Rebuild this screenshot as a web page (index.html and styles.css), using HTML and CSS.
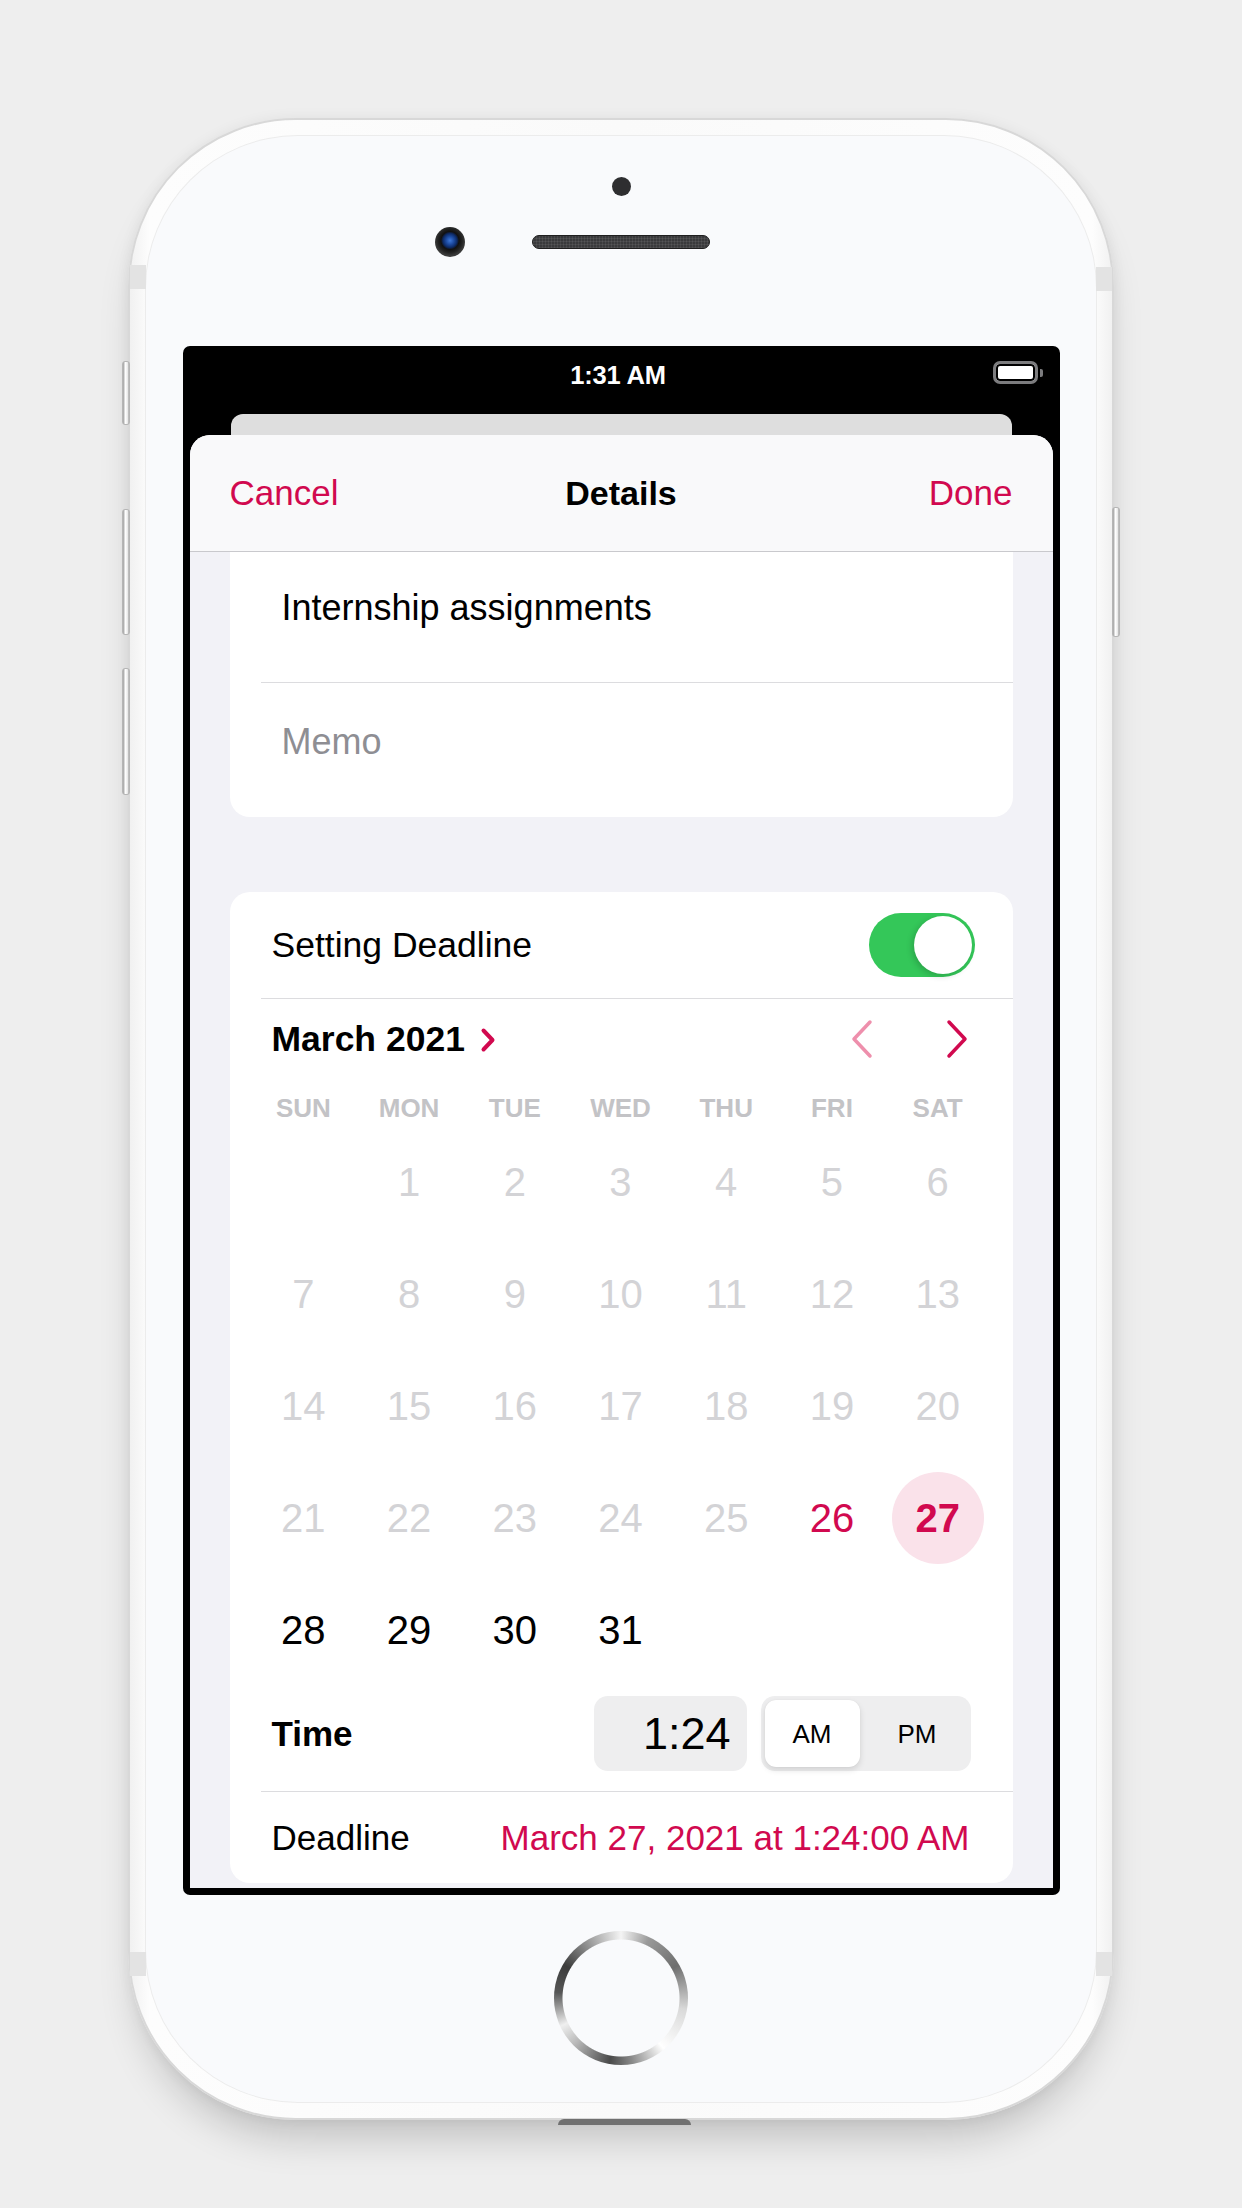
FILE: index.html
```html
<!DOCTYPE html>
<html lang="en">
<head>
<meta charset="utf-8">
<title>Details</title>
<link rel="stylesheet" href="styles.css">
</head>
<body>
<div class="phone">
  <span class="side-btn mute"></span>
  <span class="side-btn vol-up"></span>
  <span class="side-btn vol-down"></span>
  <span class="side-btn power"></span>
  <span class="antenna a-tl"></span>
  <span class="antenna a-tr"></span>
  <span class="antenna a-bl"></span>
  <span class="antenna a-br"></span>
  <span class="port"></span>
  <div class="face">
    <div class="sensor"></div>
    <div class="earpiece">
      <div class="camera"></div>
      <div class="speaker"></div>
      <div class="balance"></div>
    </div>
    <div class="screen">
      <div class="statusbar">
        <span></span>
        <span class="clock">1:31 AM</span>
        <span class="battery"><span class="battery-fill"></span><span class="battery-nub"></span></span>
      </div>
      <div class="backcard"></div>
      <div class="sheet">
        <div class="navbar">
          <span class="nav-btn">Cancel</span>
          <span class="nav-title">Details</span>
          <span class="nav-btn nav-done">Done</span>
        </div>
        <div class="content">
          <div class="card card-info">
            <div class="field-row title-row">Internship assignments</div>
            <div class="sep"></div>
            <div class="field-row memo-row">Memo</div>
          </div>
          <div class="card card-deadline">
            <div class="toggle-row">
              <span>Setting Deadline</span>
              <span class="toggle"><span class="knob"></span></span>
            </div>
            <div class="sep"></div>
            <div class="month-row">
              <span class="month-title">March 2021
                <svg class="month-chev" width="16" height="26" viewBox="0 0 16 26"><path d="M3.5 3.5 L12.5 13 L3.5 22.5" fill="none" stroke="#d1094f" stroke-width="4" stroke-linecap="round" stroke-linejoin="round"/></svg>
              </span>
              <span class="month-nav">
                <svg width="24" height="40" viewBox="0 0 24 40"><path d="M20 3 L4 20 L20 37" fill="none" stroke="#ee8fac" stroke-width="3.5" stroke-linecap="round" stroke-linejoin="round"/></svg>
                <svg width="24" height="40" viewBox="0 0 24 40"><path d="M4 3 L20 20 L4 37" fill="none" stroke="#d1094f" stroke-width="3.5" stroke-linecap="round" stroke-linejoin="round"/></svg>
              </span>
            </div>
            <div class="weekdays">
              <span>SUN</span><span>MON</span><span>TUE</span><span>WED</span><span>THU</span><span>FRI</span><span>SAT</span>
            </div>
            <div class="days">
              <span></span><span class="past">1</span><span class="past">2</span><span class="past">3</span><span class="past">4</span><span class="past">5</span><span class="past">6</span>
              <span class="past">7</span><span class="past">8</span><span class="past">9</span><span class="past">10</span><span class="past">11</span><span class="past">12</span><span class="past">13</span>
              <span class="past">14</span><span class="past">15</span><span class="past">16</span><span class="past">17</span><span class="past">18</span><span class="past">19</span><span class="past">20</span>
              <span class="past">21</span><span class="past">22</span><span class="past">23</span><span class="past">24</span><span class="past">25</span><span class="today">26</span><span class="selected"><span class="sel-circle">27</span></span>
              <span>28</span><span>29</span><span>30</span><span>31</span><span></span><span></span><span></span>
            </div>
            <div class="time-row">
              <span class="row-label-bold">Time</span>
              <span class="time-field">1:24</span>
              <span class="segmented">
                <span class="seg seg-on">AM</span>
                <span class="seg seg-off">PM</span>
              </span>
            </div>
            <div class="sep"></div>
            <div class="deadline-row">
              <span>Deadline</span>
              <span class="deadline-value">March 27, 2021 at 1:24:00 AM</span>
            </div>
          </div>
        </div>
      </div>
    </div>
    <div class="home"></div>
  </div>
</div>
</body>
</html>
```
FILE: styles.css
```css
* { box-sizing: border-box; }

html, body {
  margin: 0;
  padding: 0;
}

body {
  width: 1242px;
  height: 2208px;
  overflow: hidden;
  background: #eeeeee;
  font-family: "Liberation Sans", Arial, sans-serif;
  color: #000;
}

.phone {
  position: relative;
  width: 986px;
  height: 2002px;
  margin: 118px auto 0;
  padding: 16px;
  border: 2px solid #d8d8d8;
  border-radius: 168px;
  background: linear-gradient(90deg, #f1f1f1 0%, #fdfdfd 2%, #fafafa 50%, #fdfdfd 98%, #f1f1f1 100%);
  box-shadow: 0 28px 40px -12px rgba(0, 0, 0, 0.2), 0 0 14px rgba(0, 0, 0, 0.06);
}

.side-btn {
  position: absolute;
  width: 8px;
  border-radius: 3px;
  background: linear-gradient(90deg, #9a9a9a, #ffffff 40%, #e6e6e6 80%, #a0a0a0);
  border: 1px solid #b5b5b5;
}
.mute { left: -8px; top: 241px; height: 64px; }
.vol-up { left: -8px; top: 389px; height: 126px; }
.vol-down { left: -8px; top: 548px; height: 127px; }
.power { right: -8px; top: 387px; height: 130px; }

.antenna {
  position: absolute;
  width: 16px;
  height: 24px;
  background: #e3e3e3;
}
.a-tl { left: 0; top: 145px; }
.a-tr { right: 0; top: 147px; }
.a-bl { left: 0; top: 1832px; }
.a-br { right: 0; top: 1832px; }

.port {
  position: absolute;
  left: 428px;
  bottom: -7px;
  width: 133px;
  height: 6px;
  border-radius: 6px 6px 0 0;
  background: #707070;
}

.face {
  height: 100%;
  border-radius: 152px;
  background: #f9fafc;
  box-shadow: 0 0 0 1px #ececec;
  display: flex;
  flex-direction: column;
  align-items: center;
}

.sensor {
  margin-top: 41px;
  width: 19px;
  height: 19px;
  border-radius: 50%;
  background: #2e2e30;
}

.earpiece {
  margin-top: 31px;
  height: 30px;
  display: flex;
  align-items: center;
}

.camera {
  width: 30px;
  height: 30px;
  border-radius: 50%;
  background: radial-gradient(circle at 50% 45%, #3f78d8 0, #1c4aa0 4px, #0d2a66 7px, #111 9px, #222 12px, #3a3a3a 15px);
}

.speaker {
  margin-left: 67px;
  width: 178px;
  height: 14px;
  border-radius: 7px;
  background:
    repeating-linear-gradient(90deg, rgba(255,255,255,0.07) 0 1px, transparent 1px 3px),
    repeating-linear-gradient(0deg, rgba(255,255,255,0.07) 0 1px, transparent 1px 3px),
    #3a3a3c;
  border: 1px solid #1f1f1f;
}

.balance {
  width: 97px;
  height: 30px;
}

.screen {
  margin-top: 89px;
  width: 877px;
  height: 1549px;
  background: #000;
  border-radius: 7px;
  padding: 0 7px 7px;
  display: flex;
  flex-direction: column;
}

.statusbar {
  height: 68px;
  display: grid;
  grid-template-columns: 1fr auto 1fr;
  align-items: start;
  padding: 14px 10px 0 0;
}

.clock {
  color: #fff;
  font-size: 25.5px;
  line-height: 30px;
  font-weight: 600;
  letter-spacing: -0.2px;
  margin-left: 4px;
}

.battery {
  justify-self: end;
  margin-top: 1px;
  display: flex;
  align-items: center;
}

.battery-fill {
  display: block;
  width: 45px;
  height: 23px;
  border: 3px solid #7c7c7e;
  border-radius: 7px;
  background: #fff;
  box-shadow: inset 0 0 0 2px #000;
}

.battery-nub {
  display: block;
  width: 3px;
  height: 8px;
  margin-left: 2px;
  border-radius: 0 2px 2px 0;
  background: #7c7c7e;
}

.backcard {
  margin: 0 41px;
  height: 21px;
  border-radius: 12px 12px 0 0;
  background: #dedede;
}

.sheet {
  flex: 1;
  overflow: hidden;
  border-radius: 20px 20px 0 0;
  background: #f2f2f7;
}

.navbar {
  height: 117px;
  display: grid;
  grid-template-columns: 1fr auto 1fr;
  align-items: center;
  padding: 0 40px;
  background: #f9f9fa;
  border-bottom: 1px solid #c9c9cd;
  font-size: 35px;
  line-height: 42px;
}

.nav-btn { color: #d1094f; }
.nav-done { justify-self: end; }
.nav-title { font-weight: 700; font-size: 34px; }

.content {
  padding: 0 40px;
}

.card {
  background: #fff;
  border-radius: 20px;
  font-size: 35px;
  line-height: 42px;
}

.card-info {
  border-radius: 0 0 20px 20px;
}

.field-row {
  padding-left: 52px;
  font-size: 36px;
}

.title-row {
  height: 130px;
  padding-top: 35px;
}

.memo-row {
  height: 134px;
  padding-top: 38px;
  color: #8e8e93;
}

.sep {
  height: 1px;
  margin-left: 31px;
  background: #dcdcdf;
}

.card-deadline {
  margin-top: 75px;
}

.toggle-row {
  height: 106px;
  display: flex;
  align-items: center;
  justify-content: space-between;
  padding: 0 38px 0 42px;
  font-size: 35.5px;
}

.toggle {
  position: relative;
  width: 106px;
  height: 64px;
  border-radius: 32px;
  background: #34c759;
}

.knob {
  position: absolute;
  right: 3px;
  top: 3px;
  width: 58px;
  height: 58px;
  border-radius: 50%;
  background: #fff;
  box-shadow: -2px 2px 6px rgba(0, 0, 0, 0.18);
}

.month-row {
  height: 80px;
  display: flex;
  align-items: center;
  justify-content: space-between;
  padding: 0 42px 0 42px;
}

.month-title {
  font-weight: 700;
  font-size: 35.5px;
  display: flex;
  align-items: center;
  gap: 15px;
}

.month-chev { margin-top: 1px; }

.month-nav {
  display: flex;
  align-items: center;
  gap: 71px;
  margin-right: 2px;
}

.weekdays {
  height: 47px;
  padding: 16px 22px 0 21px;
  display: grid;
  grid-template-columns: repeat(7, 1fr);
  font-size: 26px;
  line-height: 26px;
  font-weight: 700;
  color: #c3c3c6;
  text-align: center;
}

.days {
  padding: 0 22px 0 21px;
  display: grid;
  grid-template-columns: repeat(7, 1fr);
  grid-auto-rows: 112px;
  font-size: 40px;
  line-height: 112px;
  text-align: center;
}

.days > span {
  display: flex;
  align-items: center;
  justify-content: center;
}

.past { color: #d3d3d6; }
.today { color: #d1094f; }

.sel-circle {
  width: 92px;
  height: 92px;
  border-radius: 50%;
  background: #fae2ea;
  color: #d1094f;
  font-weight: 700;
  display: flex;
  align-items: center;
  justify-content: center;
  line-height: 1;
}

.time-row {
  display: flex;
  align-items: center;
  padding: 10px 42px 20px 42px;
}

.row-label-bold {
  font-weight: 700;
}

.time-field {
  margin-left: auto;
  width: 153px;
  height: 75px;
  border-radius: 14px;
  background: #eeeeef;
  font-size: 45px;
  line-height: 75px;
  text-align: right;
  padding-right: 16px;
}

.segmented {
  margin-left: 14px;
  width: 210px;
  height: 75px;
  border-radius: 14px;
  background: #eeeeef;
  padding: 4px;
  display: flex;
}

.seg {
  flex: 1;
  display: flex;
  align-items: center;
  justify-content: center;
  font-size: 26px;
  border-radius: 11px;
}

.seg-off {
  padding-left: 8px;
}

.seg-on {
  flex: 0 0 95px;
  background: #fff;
  box-shadow: 0 3px 6px rgba(0, 0, 0, 0.12), 0 0 1px rgba(0, 0, 0, 0.1);
}

.deadline-row {
  height: 91px;
  display: flex;
  align-items: center;
  justify-content: space-between;
  padding: 0 43px 0 42px;
}

.deadline-value {
  color: #d1094f;
}

.home {
  margin-top: 36px;
  width: 134px;
  height: 134px;
  border-radius: 50%;
  background:
    radial-gradient(circle, #f9fafc 0 58px, transparent 59px),
    conic-gradient(from 0deg, #f4f4f4 0deg, #9a9a9a 25deg, #6e6e6e 60deg, #d9d9d9 100deg, #ffffff 140deg, #8a8a8a 170deg, #4a4a4a 190deg, #b8b8b8 225deg, #efefef 245deg, #565656 275deg, #3c3c3c 300deg, #a8a8a8 335deg, #f4f4f4 360deg);
}
```
